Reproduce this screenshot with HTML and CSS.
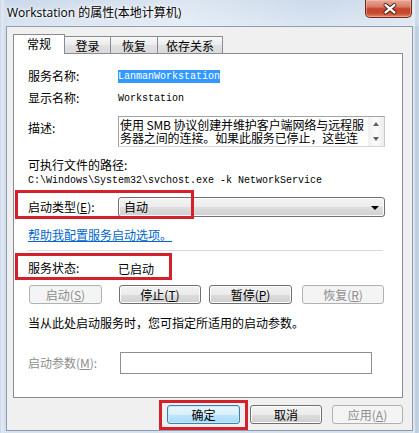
FILE: index.html
```html
<!DOCTYPE html>
<html lang="zh-CN">
<head>
<meta charset="utf-8">
<title>Workstation 的属性(本地计算机)</title>
<link rel="stylesheet" href="styles.css">
</head>
<body>
<div class="window">
  <div class="titlebar">
    <span class="title">Workstation 的属性(本地计算机)</span>
    <div class="close" aria-label="关闭">
      <svg width="46" height="18" viewBox="0 0 46 18">
        <path d="M20 5 L29 12.5 M29 5 L20 12.5" stroke="#4a1c14" stroke-width="4.2" stroke-linecap="round" fill="none"/>
        <path d="M20 5 L29 12.5 M29 5 L20 12.5" stroke="#ffffff" stroke-width="2.4" stroke-linecap="round" fill="none"/>
      </svg>
    </div>
  </div>
  <div class="client">
    <div class="tabs">
      <div class="tab active">常规</div>
      <div class="tab">登录</div>
      <div class="tab">恢复</div>
      <div class="tab">依存关系</div>
    </div>
    <div class="panel">
      <div class="row r-name"><span class="label">服务名称:</span><span class="mono sel">LanmanWorkstation</span></div>
      <div class="row r-display"><span class="label">显示名称:</span><span class="mono">Workstation</span></div>
      <div class="row r-desc">
        <span class="label">描述:</span>
        <div class="textarea">
          <div class="ta-text">使用 SMB 协议创建并维护客户端网络与远程服<br>务器之间的连接。如果此服务已停止，这些连</div>
          <div class="ta-scroll"><span class="arr up"></span><span class="arr down"></span></div>
        </div>
      </div>
      <div class="path-label">可执行文件的路径:</div>
      <div class="mono path">C:\Windows\System32\svchost.exe -k NetworkService</div>
      <div class="row r-type mark"><span class="label">启动类型(<u>E</u>):</span><div class="combo"><span class="combo-text">自动</span><span class="caret"></span></div></div>
      <a class="link">帮助我配置服务启动选项。</a>
      <div class="sep"></div>
      <div class="row r-status mark"><span class="label">服务状态:</span><span>已启动</span></div>
      <div class="svc-buttons">
        <div class="btn disabled b-start">启动(<u>S</u>)</div>
        <div class="btn b-stop">停止(<u>T</u>)</div>
        <div class="btn b-pause">暂停(<u>P</u>)</div>
        <div class="btn disabled b-resume">恢复(<u>R</u>)</div>
      </div>
      <p class="hint">当从此处启动服务时，您可指定所适用的启动参数。</p>
      <div class="row r-param"><span class="label disabled-text">启动参数(<u>M</u>):</span><div class="input"></div></div>
    </div>
    <div class="footer">
      <div class="btn default b-ok mark">确定</div>
      <div class="btn b-cancel">取消</div>
      <div class="btn disabled b-apply">应用(<u>A</u>)</div>
    </div>
  </div>
</div>
</body>
</html>
```

FILE: styles.css
```css
*, *::before, *::after { box-sizing: border-box; }
html, body { margin: 0; padding: 0; }
body {
  width: 419px;
  height: 433px;
  overflow: hidden;
  font-family: "Noto Sans CJK SC", "Noto Sans", sans-serif;
  font-size: 12px;
  color: #000;
  background: #d6e2ef;
}
.window {
  width: 419px;
  height: 433px;
  overflow: hidden;
  background:
    linear-gradient(90deg, #c8d6e8 0, #e2eaf4 2px, #d2deec 5px, rgba(210,222,236,0) 7px, rgba(210,222,236,0) 412px, #e2eaf4 414px, #b9c9dd 416px, #cbd8e8 419px),
    linear-gradient(180deg, #c9d8ea 0, #d9e4f1 26px, #d7e2ef 100%);
}
.titlebar {
  height: 26px;
  display: flex;
  align-items: center;
  justify-content: space-between;
  padding: 0 7px 0 7px;
  background: linear-gradient(100deg, rgba(255,255,255,0) 0, rgba(255,255,255,0.35) 45%, rgba(255,255,255,0.05) 75%, rgba(255,255,255,0.25) 100%);
}
.title {
  font-family: "Open Sans", "Noto Sans CJK SC", sans-serif;
  font-size: 12px;
  line-height: 16px;
  text-shadow: 0 0 6px #fff, 0 0 3px #fff;
  margin-top: -1px;
}
.close {
  align-self: flex-start;
  width: 47px;
  height: 18px;
  border: 1px solid #6e2a20;
  border-top: none;
  border-radius: 0 0 5px 5px;
  background: linear-gradient(180deg, #e9a999 0%, #d77b66 40%, #c5432c 52%, #c74a30 78%, #e28a5f 100%);
  box-shadow: inset 0 0 0 1px rgba(255,200,180,0.45);
  display: flex;
  align-items: center;
  justify-content: center;
}
.close svg { display: block; }
.client {
  margin: 0 6px;
  height: 405px;
  border: 1px solid #8e9cae;
  background: #f0f0f0;
  padding: 7px 9px 0 6px;
}
.tabs {
  display: flex;
  align-items: flex-end;
  height: 20px;
  margin-bottom: -1px;
  position: relative;
  z-index: 1;
}
.tab {
  height: 17px;
  margin-bottom: 1px;
  margin-left: -1px;
  border: 1px solid #898c95;
  border-bottom: none;
  background: linear-gradient(180deg, #f8f8f8 0%, #ececec 50%, #e1e1e1 51%, #dadada 100%);
  display: flex;
  align-items: center;
  justify-content: center;
  line-height: 14px;
  padding-top: 1px;
}
.tab.active {
  height: 20px;
  margin-bottom: 0;
  margin-left: 0;
  width: 52px;
  background: #fff;
  position: relative;
  z-index: 2;
  padding-top: 0;
  padding-bottom: 1px;
}
.tab:nth-child(2) { width: 47px; }
.tab:nth-child(3) { width: 48px; }
.tab:nth-child(4) { width: 66px; }
.panel {
  position: relative;
  height: 345px;
  border: 1px solid #898c95;
  background: #fff;
  padding: 0 17px 0 14px;
}
.row {
  display: flex;
  align-items: center;
  position: relative;
}
.label {
  width: 90px;
  flex: none;
  line-height: 14px;
}
.mono {
  font-family: "Liberation Mono", "DejaVu Sans Mono", monospace;
  font-size: 10px;
}
.r-name { margin-top: 15px; height: 14px; }
.sel {
  background: #3399ff;
  color: #fff;
  line-height: 13px;
  height: 13px;
  margin-top: 1px;
}
.r-display { margin-top: 8px; height: 14px; }
.r-desc { margin-top: 11px; align-items: flex-start; }
.r-desc .label { margin-top: 5px; }
.textarea {
  width: 267px;
  height: 31px;
  border: 1px solid #a3a3a3;
  border-right-color: #c9c9c9;
  border-bottom-color: #d5d5d5;
  display: flex;
  background: #fff;
}
.ta-text {
  flex: 1;
  padding: 1px 0 0 1px;
  line-height: 13px;
  letter-spacing: -0.1px;
  white-space: nowrap;
}
.ta-scroll {
  width: 16px;
  flex: none;
  display: flex;
  flex-direction: column;
  background: #f4f4f4;
}
.arr {
  flex: 1;
  display: flex;
  align-items: center;
  justify-content: center;
  background: linear-gradient(90deg, #f0f0f0, #fbfbfb, #ececec);
}
.arr::after {
  content: "";
  width: 0;
  height: 0;
  border-left: 3.5px solid transparent;
  border-right: 3.5px solid transparent;
}
.arr.up::after { border-bottom: 4px solid #606060; }
.arr.down::after { border-top: 4px solid #606060; }
.path-label { margin-top: 11px; line-height: 14px; }
.path { margin-top: 3px; line-height: 12px; height: 12px; white-space: nowrap; }
.r-type { margin-top: 10px; }
.combo {
  width: 267px;
  height: 20px;
  border: 1px solid #707070;
  border-radius: 3px;
  background: linear-gradient(180deg, #f4f4f4 0%, #ececec 50%, #dedede 51%, #d0d0d0 100%);
  box-shadow: inset 0 0 0 1px #fbfbfb;
  display: flex;
  align-items: center;
  justify-content: space-between;
  padding: 0 5px 0 5px;
  line-height: 14px;
}
.caret {
  width: 0;
  height: 0;
  border-left: 4px solid transparent;
  border-right: 4px solid transparent;
  border-top: 4px solid #000;
  margin-top: 1px;
}
.mark::after {
  content: "";
  position: absolute;
  border: 3px solid #d3202a;
  pointer-events: none;
}
.r-type::after { left: -13px; top: -7px; width: 179px; height: 29px; }
.link {
  display: block;
  width: fit-content;
  margin-top: 11px;
  line-height: 14px;
  color: #0066cc;
  text-decoration: underline;
}
.sep {
  margin-top: 8px;
  height: 1px;
  width: 355px;
  background: #d9d9d9;
}
.r-status { margin-top: 10px; height: 14px; }
.r-status::after { left: -13px; top: -8px; width: 157px; height: 27px; }
.btn {
  height: 19px;
  border: 1px solid #707070;
  border-radius: 3px;
  background: linear-gradient(180deg, #f2f2f2 0%, #ebebeb 50%, #dddddd 51%, #cfcfcf 100%);
  box-shadow: inset 0 0 0 1px #fcfcfc;
  display: flex;
  align-items: center;
  justify-content: center;
  line-height: 14px;
  position: relative;
}
.btn.disabled {
  border-color: #adb2b5;
  background: #f4f4f4;
  box-shadow: none;
  color: #8d8d8d;
}
.btn.default {
  border-color: #3c7fb1;
  background: linear-gradient(180deg, #eaf6fd 0%, #d9f0fc 50%, #bee6fd 51%, #a7d9f5 100%);
  box-shadow: inset 0 0 0 1px #c6e9fc;
}
.svc-buttons {
  display: flex;
  margin-top: 10px;
}
.b-start { margin-left: 1px; width: 73px; }
.b-stop { margin-left: 17px; width: 82px; }
.b-pause { margin-left: 8px; width: 83px; }
.b-resume { margin-left: 10px; width: 82px; }
.hint {
  margin: 12px 0 0 0;
  line-height: 14px;
  white-space: nowrap;
}
.r-param { margin-top: 22px; }
.disabled-text { color: #8d8d8d; }
.input {
  margin-left: 2px;
  width: 252px;
  height: 22px;
  border: 1px solid #8f8f8f;
  background: #fff;
}
.footer {
  display: flex;
  justify-content: flex-end;
  gap: 10px;
  margin-top: 7px;
}
.b-ok { width: 73px; }
.b-ok::after { left: -9px; top: -6px; width: 89px; height: 30px; }
.b-cancel { width: 72px; }
.b-apply { width: 71px; }
```
